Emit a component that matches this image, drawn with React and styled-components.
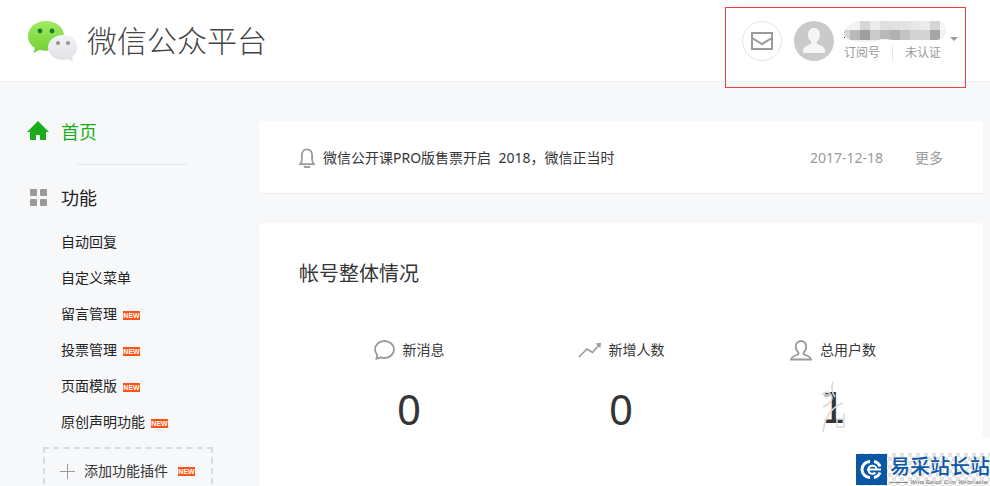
import React from "react";
import styled, { createGlobalStyle } from "styled-components";

const GlobalStyle = createGlobalStyle`
  * {
    box-sizing: border-box;
  }

  body {
    margin: 0;
    background-color: #f7f8fa;
    color: #353535;
    font-family: "Noto Sans", "Noto Sans CJK SC", sans-serif;
    font-size: 14px;
    line-height: 20px;
  }

  h1, h2, p, ul {
    margin: 0;
    padding: 0;
    font-weight: normal;
  }

  ul {
    list-style: none;
  }

  a {
    color: inherit;
    text-decoration: none;
  }

  button {
    padding: 0;
    border: 0;
    background: none;
    color: inherit;
    font: inherit;
    cursor: pointer;
  }

  svg {
    display: block;
    flex-shrink: 0;
  }
`;

const Page = styled.div`
  position: relative;
  height: 100vh;
  overflow: hidden;
`;

const Header = styled.header`
  display: flex;
  align-items: center;
  justify-content: space-between;
  height: 82px;
  padding: 0 32px 0 27px;
  background-color: #fff;
  border-bottom: 1px solid #f1f2f3;
`;

const Logo = styled.a`
  display: flex;
  align-items: center;
  gap: 9px;
`;

const LogoTitle = styled.h1`
  padding-bottom: 4px;
  color: #444;
  font-family: "Noto Sans CJK SC", sans-serif;
  font-size: 30px;
  font-weight: 300;
  line-height: 40px;
`;

const Account = styled.div`
  display: flex;
  align-items: center;
`;

const MailButton = styled.button`
  display: flex;
  align-items: center;
  justify-content: center;
  width: 40px;
  height: 40px;
  margin-right: 12px;
  border: 1px solid #e4e4e4;
  border-radius: 50%;
`;

const AccountInfo = styled.div`
  display: flex;
  flex-direction: column;
  gap: 2px;
  width: 103px;
  margin-left: 10px;
`;

const AccountTags = styled.ul`
  display: flex;
  color: #9a9a9a;
  font-size: 12px;
  line-height: 16px;
`;

const AccountTag = styled.li`
  & + & {
    margin-left: 12px;
    padding-left: 12px;
    border-left: 1px solid #e4e4e4;
  }
`;

const MenuButton = styled.button`
  margin: -4px 0 0 3px;
`;

const Highlight = styled.div`
  position: absolute;
  top: 7px;
  right: 24px;
  width: 241px;
  height: 81px;
  border: 1px solid #f03c3c;
  pointer-events: none;
`;

const Body = styled.div`
  display: flex;
  padding: 39px 7px 0 0;
`;

const Sidebar = styled.nav`
  flex: 0 0 259px;
  padding-left: 28px;
`;

const MenuTitle = styled.a`
  display: flex;
  align-items: center;
  height: 22px;
  color: ${(props) => (props.$active ? "#1aad19" : "#222")};
  font-size: 18px;
`;

const MenuIcon = styled.span`
  display: flex;
  justify-content: center;
  width: 20px;
  height: 22px;
  margin-right: 13px;
  padding-top: ${(props) => (props.$small ? "2px" : "0")};
`;

const Divider = styled.hr`
  width: 110px;
  margin: 21px 0 22px 49px;
  border: 0;
  border-top: 1px solid #e4e5e7;
`;

const Submenu = styled.ul`
  margin-top: 15px;
`;

const SubmenuLink = styled.a`
  display: flex;
  align-items: center;
  gap: 6px;
  height: 36px;
  padding-left: 33px;
  color: #222;
`;

const New = styled.span`
  height: 9px;
  width: 17px;
  margin-top: 3px;
  background-color: #ff5317;
  color: #fff;
  font-family: "Liberation Sans Narrow", "Liberation Sans", sans-serif;
  font-size: 7px;
  font-weight: bold;
  line-height: 9px;
  text-align: center;
`;

const AddButton = styled.button`
  display: flex;
  align-items: center;
  width: 170px;
  height: 48px;
  margin: 7px 0 0 15px;
  padding: 0 15px;
  border: 2px dashed #d9dadc;

  ${New} {
    margin: 0 0 0 10px;
  }
`;

const AddText = styled.span`
  margin-left: 9px;
`;

const Main = styled.main`
  flex: 1;
  min-width: 0;
`;

const Card = styled.section`
  padding: ${(props) => (props.$compact ? "27px 40px 25px" : "39px 40px 120px")};
  margin-bottom: 30px;
  background-color: #fff;
  border-radius: 3px;
  box-shadow: 0 1px 2px rgba(0, 0, 0, 0.06);
`;

const Notice = styled.div`
  display: flex;
  align-items: center;
  gap: 8px;
`;

const NoticeLink = styled.a`
  flex: 1;
  white-space: pre;
`;

const NoticeMeta = styled.span`
  margin-right: 24px;
  color: #9a9a9a;
`;

const MoreLink = styled.a`
  color: #9a9a9a;
`;

const CardTitle = styled.h2`
  font-size: 20px;
  line-height: 24px;
`;

const Stats = styled.ul`
  display: grid;
  grid-template-columns: repeat(3, 1fr);
  margin-top: 52px;
  padding: 0 4px;
`;

const Stat = styled.li`
  display: flex;
  flex-direction: column;
  align-items: center;
`;

const StatLabel = styled.p`
  display: flex;
  align-items: center;
  gap: 7px;
  height: 24px;
`;

const StatValue = styled.p`
  position: relative;
  margin-top: 23px;
  font-family: ${(props) => (props.$smudged ? '"DejaVu Sans"' : '"Noto Sans"')}, sans-serif;
  font-size: 42px;
  line-height: 48px;
`;

const Smudge = styled.svg`
  position: absolute;
  top: -4px;
  left: -2px;
`;

const Watermark = styled.aside`
  position: absolute;
  right: 0;
  bottom: 0;
  width: 134px;
  padding-top: 16px;
  background-color: #fff;
`;

const WatermarkPlate = styled.div`
  display: flex;
  gap: 3px;
  height: 33px;
  padding-top: 1px;
  background: repeating-conic-gradient(#e3e3e3 0% 25%, #fff 0% 50%) 0 0 / 8px 8px;
`;

const WatermarkName = styled.p`
  color: #0a57a6;
  font-family: "Noto Sans CJK SC", sans-serif;
  font-size: 20px;
  font-weight: 500;
  line-height: 24px;
  white-space: nowrap;
`;

const WatermarkSite = styled.p`
  display: flex;
  align-items: center;
  gap: 2px;
  margin-top: 1px;
  color: #777;
  font-family: "Liberation Sans", sans-serif;
  font-size: 6px;
  font-style: italic;
  line-height: 6px;
  white-space: nowrap;

  &::before {
    content: "";
    width: 18px;
    height: 1px;
    background-color: #888;
  }
`;

const menu = [
  { name: "自动回复" },
  { name: "自定义菜单" },
  { name: "留言管理", isNew: true },
  { name: "投票管理", isNew: true },
  { name: "页面模版", isNew: true },
  { name: "原创声明功能", isNew: true },
];

// grey levels of the hidden account name, one per tile
const mosaic = [
  ["#f1f1f1", "#f3f3f3", "#d6d6d6", "#ebebeb", "#dfdfdf", "#e1e1e1", "#e3e3e3", "#e7e7e7", "#ebebeb", "#d5d5d5", "#f6f6f6"],
  ["#d5d5d5", "#b9b9b9", "#9f9f9f", "#cacaca", "#b9b9b9", "#b1b1b1", "#c3c3c3", "#d2d2d2", "#d3d3d3", "#a6a6a6", "#f2f2f2"],
];

function WechatLogo() {
  return (
    <svg width="51" height="42" viewBox="0 0 51 42">
      <defs>
        <linearGradient id="green" x1="0" y1="0" x2="0" y2="1">
          <stop offset="0" stopColor="#a0ea62" />
          <stop offset="1" stopColor="#72d033" />
        </linearGradient>
        <linearGradient id="silver" x1="0" y1="0" x2="0" y2="1">
          <stop offset="0" stopColor="#f3f3f7" />
          <stop offset="1" stopColor="#e0e1e6" />
        </linearGradient>
      </defs>
      <path d="M19 1C9 1 1 7.600 1 16c0 5 2.600 9 6.800 11.700L6.500 33l6-3.200c2 .7 4.200 1 6.500 1 10 0 18-6.600 18-14.900S29 1 19 1z" fill="url(#green)" />
      <circle cx="13" cy="11" r="2.400" fill="#128026" />
      <circle cx="25" cy="11" r="2.400" fill="#128026" />
      <path d="M36 15c-8.400 0-15 5.500-15 12.500S27.600 40 36 40c2 0 3.800-.3 5.500-.8l4.700 2.300-1.200-4.200c3.300-2.300 5.400-5.800 5.400-9.800C50.400 20.500 44.400 15 36 15z" fill="url(#silver)" />
      <circle cx="31" cy="23" r="2.100" fill="#8d9799" />
      <circle cx="41" cy="23" r="2.100" fill="#8d9799" />
    </svg>
  );
}

function Avatar() {
  return (
    <svg width="40" height="40" viewBox="0 0 40 40">
      <circle cx="20" cy="20" r="20" fill="#cacaca" />
      <path d="M20 7c-3.600 0-6 2.700-6 6.500 0 3 1.400 5.700 3.200 7.100v2.200c-4 1.600-8.200 3.400-8.200 6.700V32h22v-2.500c0-3.300-4.200-5.100-8.200-6.700v-2.200c1.800-1.400 3.200-4.100 3.200-7.100C26 9.700 23.600 7 20 7z" fill="#f5f5f5" />
    </svg>
  );
}

function HiddenName() {
  return (
    <svg width="103" height="22" viewBox="1 1 103 22">
      <clipPath id="blot">
        <path d="M17 0H96q7 3 7 11t-9 9H50q-5-1-12-1-4 3-16 3Q1 22 1 12 2 6 17 0z" />
      </clipPath>
      <g clipPath="url(#blot)">
        <rect width="104" height="22" fill="#f0f0f0" />
        {mosaic.map((row, y) =>
          row.map((color, x) => (
            <rect key={`${x}-${y}`} x={x * 10 - 3} y={y * 10} width="10" height="10" fill={color} />
          ))
        )}
      </g>
      <rect x="1" y="17" width="1" height="1" fill="#222" />
    </svg>
  );
}

function App() {
  return (
    <>
      <GlobalStyle />
      <Page>
        <Header>
          <Logo href="#">
            <WechatLogo />
            <LogoTitle>微信公众平台</LogoTitle>
          </Logo>
          <Account>
            <MailButton aria-label="通知">
              <svg width="22" height="18" viewBox="0 0 22 18" fill="none" stroke="#9a9a9a" strokeWidth="2">
                <rect x="1" y="1" width="20" height="16" />
                <path d="M1 6l10 6 10-6" />
              </svg>
            </MailButton>
            <Avatar />
            <AccountInfo>
              <HiddenName />
              <AccountTags>
                <AccountTag>订阅号</AccountTag>
                <AccountTag>未认证</AccountTag>
              </AccountTags>
            </AccountInfo>
            <MenuButton aria-label="账号菜单">
              <svg width="8" height="8" viewBox="0 0 8 8">
                <path d="M0 2h8L4 6z" fill="#9a9a9a" />
              </svg>
            </MenuButton>
          </Account>
        </Header>

        <Body>
          <Sidebar>
            <MenuTitle href="#" $active>
              <MenuIcon>
                <svg width="22" height="20" viewBox="0 0 22 20">
                  <path d="M11 0L0 11h3v8h6v-5h4v5h6v-8h3z" fill="#1aad19" />
                </svg>
              </MenuIcon>
              首页
            </MenuTitle>
            <Divider />
            <MenuTitle href="#">
              <MenuIcon $small>
                <svg width="17" height="17" viewBox="0 0 17 17" fill="#9a9a9a">
                  <rect width="7" height="7" rx="1" />
                  <rect x="10" width="7" height="7" rx="1" />
                  <rect y="10" width="7" height="7" rx="1" />
                  <rect x="10" y="10" width="7" height="7" rx="1" />
                </svg>
              </MenuIcon>
              功能
            </MenuTitle>
            <Submenu>
              {menu.map((item) => (
                <li key={item.name}>
                  <SubmenuLink href="#">
                    {item.name}
                    {item.isNew && <New>NEW</New>}
                  </SubmenuLink>
                </li>
              ))}
            </Submenu>
            <AddButton>
              <svg width="15" height="15" viewBox="0 0 15 15" fill="#9a9a9a">
                <rect x="7" width="1" height="15" />
                <rect y="7" width="15" height="1" />
              </svg>
              <AddText>添加功能插件</AddText>
              <New>NEW</New>
            </AddButton>
          </Sidebar>

          <Main>
            <Card $compact>
              <Notice>
                <svg width="16" height="20" viewBox="0 0 16 20" fill="none" stroke="#9a9a9a" strokeWidth="1.800">
                  <path d="M1 16.200h14c-1.600-1.600-1.900-3-1.900-5V7c0-3.300-2-5.700-5.100-5.700S2.900 3.700 2.900 7v4.200c0 2-.3 3.400-1.900 5z" />
                  <path d="M5 18.200c1.500 1.300 4.500 1.300 6 0" />
                </svg>
                <NoticeLink href="#">微信公开课PRO版售票开启  2018，微信正当时</NoticeLink>
                <NoticeMeta>2017-12-18</NoticeMeta>
                <MoreLink href="#">更多</MoreLink>
              </Notice>
            </Card>

            <Card>
              <CardTitle>帐号整体情况</CardTitle>
              <Stats>
                <Stat>
                  <StatLabel>
                    <svg width="22" height="20" viewBox="0 0 22 20" fill="none" stroke="#9a9a9a" strokeWidth="1.800">
                      <path d="M2.500 18.800l.7-4.200C1.700 13 1 11.400 1 9.500 1 4.800 5.200 1 10.500 1S20 4.800 20 9.500 15.800 18 10.500 18c-1.500 0-2.700-.2-3.900-.7z" />
                    </svg>
                    新消息
                  </StatLabel>
                  <StatValue>0</StatValue>
                </Stat>
                <Stat>
                  <StatLabel>
                    <svg width="24" height="16" viewBox="0 0 24 16" fill="none" stroke="#9a9a9a" strokeWidth="1.500">
                      <path d="M1 15l8-8 5.500 3.500L21 3" />
                      <path d="M17.500 1.500L23 .8l-.6 5.500z" fill="#9a9a9a" stroke="none" />
                    </svg>
                    新增人数
                  </StatLabel>
                  <StatValue>0</StatValue>
                </Stat>
                <Stat>
                  <StatLabel>
                    <svg width="23" height="21" viewBox="0 0 23 21" fill="none" stroke="#9a9a9a" strokeWidth="1.800">
                      <path d="M11 1C7.800 1 5.800 3.200 5.800 6.500c0 2.700 1 4.700 2.600 6v1.700C5 15.600 1 16.800 1 19.500h20c0-2.700-4-3.900-7.400-5.300v-1.700c1.600-1.300 2.600-3.300 2.600-6C16.200 3.200 14.200 1 11 1z" />
                    </svg>
                    总用户数
                  </StatLabel>
                  <StatValue $smudged>
                    1
                    <Smudge width="30" height="54" viewBox="0 0 30 54" fill="none">
                      <path d="M6 13h7v5H6zM7 42h7v4H7z" fill="#fff" fillOpacity="0.65" />
                      <path d="M15 1q-3 8 2 15M4 14q5-6 9 0t-8 12M25 22Q8 28 5 51M19 46v-8h7v8zM26 46V32" stroke="#d9d9d9" strokeWidth="1.500" />
                    </Smudge>
                  </StatValue>
                </Stat>
              </Stats>
            </Card>
          </Main>
        </Body>

        <Highlight />
        <Watermark>
          <WatermarkPlate>
            <svg width="31" height="31" viewBox="0 0 31 31" fill="none">
              <rect width="31" height="31" fill="#0a57a6" />
              <path d="M14 7.500a8 8 0 0 0 0 16M18 7.500a8 8 0 0 1 6 5M24 18.500a8 8 0 0 1-6 5" stroke="#fff" strokeWidth="3" />
              <path d="M11 15.500h14M20.500 15c0-4.500-8-4.500-8 .5s5 5 7 3" stroke="#fff" strokeWidth="2" />
            </svg>
            <div>
              <WatermarkName>易采站长站</WatermarkName>
              <WatermarkSite>Www.Easck.Com Webmaster</WatermarkSite>
            </div>
          </WatermarkPlate>
        </Watermark>
      </Page>
    </>
  );
}

export default App;
